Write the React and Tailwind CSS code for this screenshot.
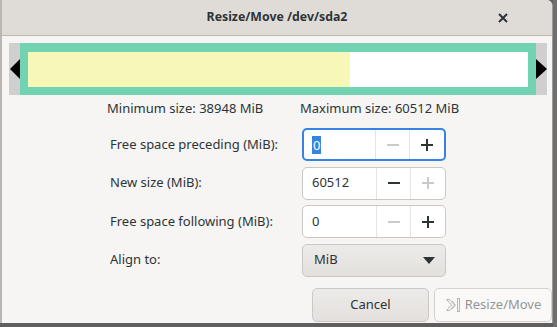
import { useState } from "react";

const font = { fontFamily: '"Noto Sans", "DejaVu Sans", sans-serif' };

const Minus = ({ disabled }) => (
  <svg width="12" height="12" viewBox="0 0 12 12">
    <rect x="0" y="5" width="12" height="2" fill={disabled ? "#c9cbcb" : "#2e3436"} />
  </svg>
);

const Plus = ({ disabled }) => (
  <svg width="12" height="12" viewBox="0 0 12 12">
    <rect x="0" y="5" width="12" height="2" fill={disabled ? "#c9cbcb" : "#2e3436"} />
    <rect x="5" y="0" width="2" height="12" fill={disabled ? "#c9cbcb" : "#2e3436"} />
  </svg>
);

const SpinRow = ({ label, value, focused, minusOff, plusOff, selected }) => (
  <div className="flex items-center h-[33px]">
    <div className="w-[300px] shrink-0 pl-[108px] whitespace-nowrap">{label}</div>
    <div
      className={`flex w-[144px] h-[33px] rounded-[5px] bg-white overflow-hidden ${
        focused ? "border-2 border-[#3584e4]" : "border border-[#cdc7c2]"
      }`}
    >
      <div className={`flex items-center flex-1 ${focused ? "pl-[8px]" : "pl-[9px]"}`}>
        {selected ? (
          <span className="bg-[#3584e4] text-white px-[1px] leading-[18px]">{value}</span>
        ) : (
          <span>{value}</span>
        )}
      </div>
      <div className="w-[34px] flex items-center justify-center border-l border-[#e5e3e1]">
        <Minus disabled={minusOff} />
      </div>
      <div className="w-[35px] flex items-center justify-center border-l border-[#e5e3e1]">
        <Plus disabled={plusOff} />
      </div>
    </div>
  </div>
);

const App = () => {
  const [align] = useState("MiB");

  return (
    <div
      className="w-[557px] h-[327px] flex bg-[#5e5e5e] overflow-hidden text-[13px] text-[#2e3436]"
      style={font}
    >
      <div className="w-[2px] h-[323px] bg-[#b9b6b3]" />
      <div className="w-[551px] h-[323px] shrink-0 flex flex-col bg-[#f6f5f4] rounded-tr-[6px] overflow-hidden border-r border-[#9c9a98]">
        {/* header */}
        <div className="relative h-[36px] shrink-0 flex items-center justify-center bg-[#dfdcd8] border-b border-[#bfb8b1]">
          <span className="font-bold text-[12.3px] -mt-[1px]">Resize/Move /dev/sda2</span>
          <button className="absolute left-[495px] top-[12px] w-[12px] h-[12px] flex items-center justify-center">
            <svg width="10" height="10" viewBox="0 0 10 10">
              <path d="M1 1 L9 9 M9 1 L1 9" stroke="#2e3436" strokeWidth="2" />
            </svg>
          </button>
        </div>

        {/* partition bar */}
        <div className="mt-[7px] ml-[7px] w-[538px] h-[52px] shrink-0 bg-[#cfcfcf] flex items-center">
          <div className="w-[11px] flex justify-end">
            <svg width="10" height="20" viewBox="0 0 10 20">
              <polygon points="0,10 10,0 10,20" fill="#000" />
            </svg>
          </div>
          <div className="w-[516px] h-[52px] bg-[#72d3b3] pt-[9px] pb-[8px] px-[8px] flex">
            <div className="w-[322px] bg-[#f7f8b8]" />
            <div className="flex-1 bg-white" />
          </div>
          <div className="w-[11px] flex">
            <svg width="11" height="20" viewBox="0 0 11 20">
              <polygon points="0,0 11,10 0,20" fill="#000" />
            </svg>
          </div>
        </div>

        {/* min / max */}
        <div className="flex mt-[5px] h-[18px] items-center">
          <div className="w-[298px] shrink-0 pl-[105px] whitespace-nowrap">Minimum size: 38948 MiB</div>
          <div className="whitespace-nowrap">Maximum size: 60512 MiB</div>
        </div>

        {/* spin rows */}
        <div className="flex flex-col gap-[5.5px] mt-[10px]">
          <SpinRow label="Free space preceding (MiB):" value="0" focused selected minusOff />
          <SpinRow label="New size (MiB):" value="60512" plusOff />
          <SpinRow label="Free space following (MiB):" value="0" minusOff />
          <div className="flex items-center h-[33px]">
            <div className="w-[300px] shrink-0 pl-[108px] whitespace-nowrap">Align to:</div>
            <button className="w-[144px] h-[33px] rounded-[5px] border border-[#cdc7c2] bg-gradient-to-b from-[#edebe9] to-[#e3e0dd] flex items-center justify-between pl-[11px] pr-[10px]">
              <span>{align}</span>
              <svg width="12" height="7" viewBox="0 0 12 7">
                <polygon points="0,0 12,0 6,7" fill="#2e3436" />
              </svg>
            </button>
          </div>
        </div>

        {/* buttons */}
        <div className="flex mt-[11px] pl-[310px] gap-[5px]">
          <button className="w-[117px] h-[34px] rounded-[5px] border border-[#cdc7c2] bg-gradient-to-b from-[#edebe9] to-[#e3e0dd] flex items-center justify-center">
            Cancel
          </button>
          <button className="w-[118px] h-[34px] rounded-[5px] border border-[#d5d0cc] bg-[#faf9f8] flex items-center justify-center gap-[4px] text-[#929595]">
            <svg width="16" height="16" viewBox="0 0 16 16" fill="none" stroke="#b4b6b6" strokeWidth="1">
              <path d="M1.5 2.5 L4.5 2.5 L9.5 8 L4.5 13.5 L1.5 13.5 L6.5 8 Z" />
              <path d="M7 4 L10.5 8 L7 12" />
              <rect x="12.5" y="1.5" width="2" height="13" />
            </svg>
            <span>Resize/Move</span>
          </button>
        </div>
      </div>
      <div className="w-[4px] h-[327px] bg-[#6f6f6f]" />
    </div>
  );
};

export default App;
